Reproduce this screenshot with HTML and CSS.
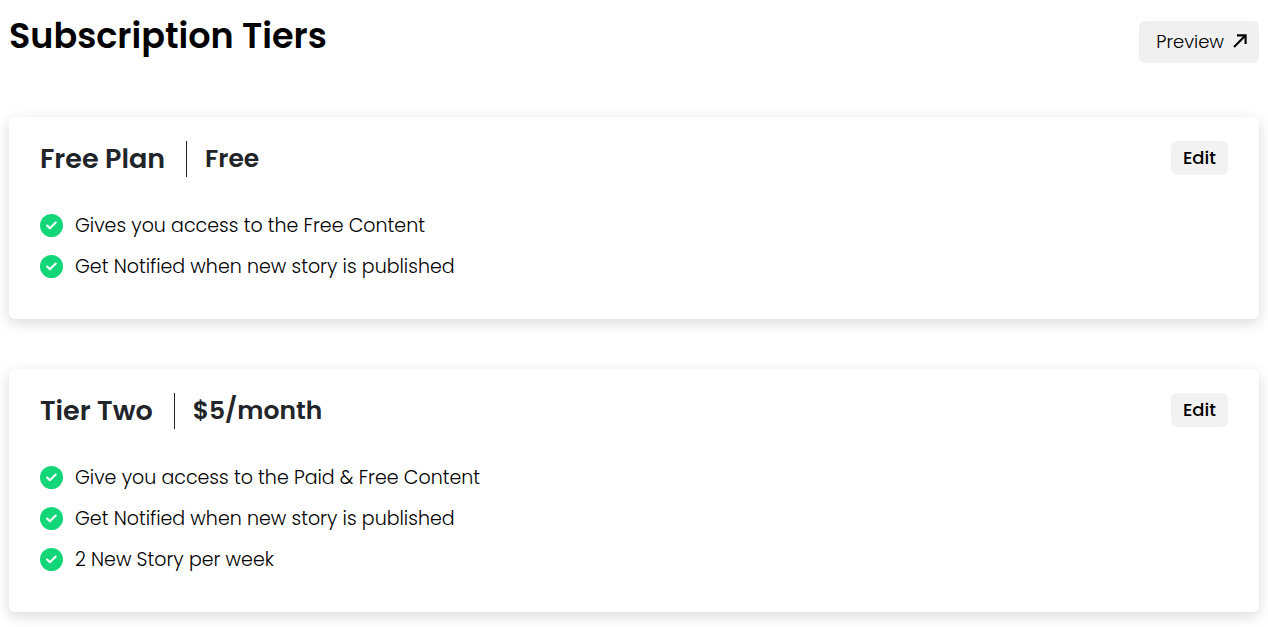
FILE: index.html
```
<!DOCTYPE html>
<html lang="en">

<head>
	<meta charset="UTF-8">
	<meta name="viewport" content="width=device-width, initial-scale=1.0">
	<title>Subscription Tiers</title>
	<link rel="stylesheet" href="styles.css">
</head>

<body>
	<!-- shared check icon -->
	<svg class="sprite" aria-hidden="true">
		<symbol id="check" viewBox="0 0 24 24">
			<circle cx="12" cy="12" r="12" fill="#12d678" />
			<path d="M7.4 12l2.9 2.8 6.1-5.9" fill="none" stroke="#fff" stroke-width="2.2" stroke-linecap="round" stroke-linejoin="round" />
		</symbol>
	</svg>

	<header class="header">
		<h1>Subscription Tiers</h1>
		<button class="preview" type="button">
			Preview
			<svg class="arrow" viewBox="0 0 14 14" aria-hidden="true">
				<path d="M1 13L12.4 1.6M4 1.4h8.6V10" fill="none" stroke="#000" stroke-width="2.1" />
			</svg>
		</button>
	</header>

	<main class="tiers">
		<section class="card">
			<div class="card-head">
				<h2>Free Plan</h2>
				<p class="price">Free</p>
				<button class="edit" type="button">Edit</button>
			</div>
			<ul>
				<li><svg class="check"><use href="#check" /></svg>Gives you access to the Free Content</li>
				<li><svg class="check"><use href="#check" /></svg>Get Notified when new story is published</li>
			</ul>
		</section>

		<section class="card">
			<div class="card-head">
				<h2>Tier Two</h2>
				<p class="price">$5/month</p>
				<button class="edit" type="button">Edit</button>
			</div>
			<ul>
				<li><svg class="check"><use href="#check" /></svg>Give you access to the Paid &amp; Free Content</li>
				<li><svg class="check"><use href="#check" /></svg>Get Notified when new story is published</li>
				<li><svg class="check"><use href="#check" /></svg>2 New Story per week</li>
			</ul>
		</section>
	</main>
</body>

</html>
```
FILE: styles.css
```
* {
	margin: 0;
	padding: 0;
	list-style: none;
	box-sizing: border-box;
}

body {
	min-height: 100vh;
	padding: 0 9px;
	background: #fff;
	color: #212529;
	font-family: Poppins, Inter, sans-serif;
}

button {
	border: 0;
	border-radius: 6px;
	color: #000;
	font-family: inherit;
	font-size: 18px;
	cursor: pointer;
}

.sprite {
	display: none;
}

.header {
	display: flex;
	justify-content: space-between;
	align-items: flex-end;
	height: 63px;
	margin-bottom: 54px;
}

.header h1 {
	color: #000;
	font-size: 35px;
	font-weight: 600;
	line-height: 54px;
}

.preview {
	display: flex;
	align-items: center;
	gap: 9px;
	height: 42px;
	padding: 0 12px 2px 17px;
	background: #f0f0f0;
	font-weight: 300;
}

.arrow {
	width: 14px;
	height: 14px;
}

.tiers {
	display: flex;
	flex-direction: column;
	gap: 50px;
}

.card {
	padding: 24px 31px 32px;
	border-radius: 6px;
	background: #fff;
	box-shadow: 0 4px 14px rgba(0, 0, 0, .15);
}

.card-head {
	display: flex;
	align-items: center;
	margin-bottom: 28px;
}

.card-head h2 {
	padding-right: 21px;
	font-size: 27px;
	font-weight: 600;
	line-height: 36px;
}

.price {
	padding-left: 18px;
	border-left: 1px solid #212529;
	font-size: 25px;
	font-weight: 600;
	line-height: 36px;
}

.edit {
	align-self: flex-start;
	height: 34px;
	margin-left: auto;
	padding: 0 12px 1px;
	background: #f2f2f2;
	font-weight: 500;
}

.card li {
	display: flex;
	align-items: center;
	gap: 12px;
	height: 41px;
	color: #000;
	font-size: 19px;
	font-weight: 300;
}

.check {
	width: 23px;
	height: 23px;
}
```
